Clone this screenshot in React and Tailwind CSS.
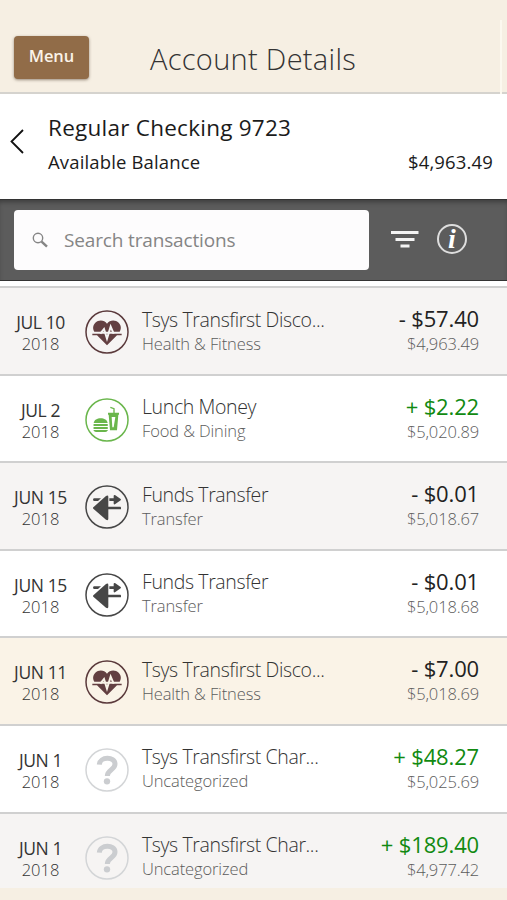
const iconProps = {
  viewBox: '0 0 132 132',
  className: 'block h-11 w-11 shrink-0',
  'aria-hidden': true,
}

function HeartIcon({ bg }) {
  return (
    <svg {...iconProps}>
      <circle cx="66" cy="66" r="63" fill="none" stroke="#5b3a3c" strokeWidth="4.5" />
      <g fill="#633f41">
        <path d="M28 65 C22 55 24 45 31 38 C41 28 58 29 66 41 C74 29 91 28 101 38 C108 45 110 55 104 65 Z" />
        <path d="M22 71 H110 V76 H96 L66 106 L36 76 H22 Z" />
      </g>
      <path d="M46 71 L57 57 L66 86 L77 50 L86 71" fill="none" stroke={bg} strokeWidth="6" />
    </svg>
  )
}

function FoodIcon() {
  return (
    <svg {...iconProps}>
      <circle cx="66" cy="66" r="63" fill="none" stroke="#6ab64c" strokeWidth="4.5" />
      <g fill="#6ab64c">
        <path d="M26 75 C28 56 66 56 68 75 Z" />
        <rect x="25" y="78" width="44" height="6" rx="3" />
        <rect x="25" y="87" width="44" height="6" rx="3" />
        <path d="M26 96 H68 V97 Q67 102 61 102 H33 Q27 102 26 97 Z" />
        <path
          fillRule="evenodd"
          d="M69 44 H102 V50 H100 L96 97 H75 L71 50 H69 Z M80 57 L82 88 H86 L91 57 Z"
        />
      </g>
      <path d="M76 28 L87 32 V45" fill="none" stroke="#6ab64c" strokeWidth="4" />
    </svg>
  )
}

function TransferIcon() {
  return (
    <svg {...iconProps}>
      <circle cx="66" cy="66" r="63" fill="none" stroke="#474747" strokeWidth="4.5" />
      <g fill="#474747">
        <path d="M25 67 L63 33 Q70 29 70 36 V101 Q70 108 63 104 L25 71 Q23 69 25 67 Z" />
        <rect x="66" y="65" width="42" height="8" rx="2" />
        <path d="M26 40 H48 L39 48 H26 Q22 44 26 40 Z" />
        <path d="M73 40 H86 V32 Q87 28 91 31 L107 42 Q109 44 107 46 L91 57 Q87 60 86 56 V48 H73 Z" />
      </g>
    </svg>
  )
}

function UnknownIcon() {
  return (
    <svg {...iconProps}>
      <circle cx="66" cy="66" r="63" fill="none" stroke="#d3d5d7" strokeWidth="4.5" />
      <path
        d="M43 50 C44 25 90 25 90 48 C90 66 67 64 67 84"
        fill="none"
        stroke="#cbcdd0"
        strokeWidth="15"
      />
      <circle cx="66" cy="100" r="9.5" fill="#cbcdd0" />
    </svg>
  )
}

const icons = { heart: HeartIcon, food: FoodIcon, transfer: TransferIcon, unknown: UnknownIcon }

const rows = [
  { date: 'JUL 10', name: 'Tsys Transfirst Disco...', category: 'Health & Fitness', amount: '- $57.40', balance: '$4,963.49', icon: 'heart', shade: 'bg-[#f6f4f3]', bg: '#f6f4f3' },
  { date: 'JUL 2', name: 'Lunch Money', category: 'Food & Dining', amount: '+ $2.22', balance: '$5,020.89', icon: 'food', shade: 'bg-white', credit: true },
  { date: 'JUN 15', name: 'Funds Transfer', category: 'Transfer', amount: '- $0.01', balance: '$5,018.67', icon: 'transfer', shade: 'bg-[#f6f4f3]' },
  { date: 'JUN 15', name: 'Funds Transfer', category: 'Transfer', amount: '- $0.01', balance: '$5,018.68', icon: 'transfer', shade: 'bg-white' },
  { date: 'JUN 11', name: 'Tsys Transfirst Disco...', category: 'Health & Fitness', amount: '- $7.00', balance: '$5,018.69', icon: 'heart', shade: 'bg-[#faf3e7]', bg: '#faf3e7' },
  { date: 'JUN 1', name: 'Tsys Transfirst Char...', category: 'Uncategorized', amount: '+ $48.27', balance: '$5,025.69', icon: 'unknown', shade: 'bg-white', credit: true },
  { date: 'JUN 1', name: 'Tsys Transfirst Char...', category: 'Uncategorized', amount: '+ $189.40', balance: '$4,977.42', icon: 'unknown', shade: 'bg-[#f6f4f3]', credit: true },
]

function Row({ row }) {
  const Icon = icons[row.icon]
  return (
    <li className={`flex h-[87.6px] shrink-0 items-start border-t-2 border-[#d0d0d0] whitespace-nowrap ${row.shade}`}>
      <div className="flex w-[81px] shrink-0 flex-col items-center pt-[24px] text-[#333]">
        <span className="text-[17.5px] leading-[21px] tracking-[-0.4px]">{row.date}</span>
        <span className="text-[16.5px] leading-[21px] font-light">2018</span>
      </div>
      <div className="ml-1 pt-[22px]">
        <Icon bg={row.bg} />
      </div>
      <div className="ml-[13px] flex flex-1 flex-col pt-[18.5px] font-light">
        <span className="text-[19.5px] leading-[25px] tracking-[-0.38px] text-[#333]">{row.name}</span>
        <span className="text-[16.5px] leading-6 tracking-[-0.12px] text-[#5c5c5c]">{row.category}</span>
      </div>
      <div className="flex flex-col items-end pt-[17px] pr-7">
        <span className={`text-[22px] leading-[27px] tracking-[-0.15px] ${row.credit ? 'text-[#118a11]' : 'text-[#222]'}`}>{row.amount}</span>
        <span className="text-[16.5px] leading-[23.5px] font-light tracking-[-0.15px] text-[#5c5c5c]">{row.balance}</span>
      </div>
    </li>
  )
}

export default function App() {
  return (
    <div className="flex h-[900px] w-full flex-col overflow-hidden bg-[#f6efe3] font-['Open_Sans','Noto_Sans',sans-serif]">
      <header className="flex h-[94px] shrink-0 items-start border-b-2 border-[#d5d3ce] pl-3.5">
        <button className="mt-9 h-[43px] w-[75px] rounded-[4px] bg-[#916c48] pb-[3px] text-[16.5px] font-semibold tracking-[-0.1px] text-[#fbf3e8] shadow-[0_1px_3px_rgba(60,40,20,0.5)]">
          Menu
        </button>
        <h1 className="mt-[39px] ml-[61px] text-[29px] leading-10 font-light tracking-[0.3px] text-[#333]">Account Details</h1>
        <div className="mt-5 ml-auto h-[74px] w-[7px] border-l-2 border-[#fcf8ef]" />
      </header>

      <section className="flex h-[105px] shrink-0 bg-white text-[#1b1b1b]">
        <svg viewBox="0 0 14 26" className="mt-[34px] ml-2.5 h-[26px] w-3.5" fill="none" stroke="#111" strokeWidth="1.8">
          <path d="M13 2 L1.5 13.5 L13 25" />
        </svg>
        <div className="ml-6 flex flex-1 flex-col pt-[18px] pr-3.5">
          <h2 className="text-[22.5px] leading-8 tracking-[0.25px]">Regular Checking 9723</h2>
          <div className="flex justify-between pt-1 text-[18.5px] leading-7 tracking-[0.15px]">
            <span>Available Balance</span>
            <span>$4,963.49</span>
          </div>
        </div>
      </section>

      <section className="flex h-[82px] shrink-0 items-center border-y border-[#333] bg-[#5c5c5c] pl-3.5 shadow-[inset_0_4px_5px_-2px_rgba(0,0,0,0.35)]">
        <div className="flex h-[60px] w-[355px] items-center rounded-[4px] bg-[#fdfcfd]">
          <svg viewBox="0 0 16 16" className="ml-[18px] h-4 w-4" fill="none" stroke="#858585">
            <circle cx="6" cy="6" r="4.7" strokeWidth="1.4" />
            <path d="M9.6 9.6 L15 14.7" strokeWidth="2.4" />
          </svg>
          <span className="ml-4 text-[19px] tracking-[-0.15px] text-[#858585]">Search transactions</span>
        </div>
        <svg viewBox="0 0 28 18" className="ml-[22px] h-[18px] w-7" fill="#f4f4f4">
          <rect x="0" y="0" width="27.5" height="3" />
          <rect x="4.5" y="7" width="19" height="3" />
          <rect x="9.5" y="13.5" width="9" height="3" />
        </svg>
        <span className="mb-0.5 ml-[18px] flex h-[30px] w-[30px] items-center justify-center rounded-full border-2 border-[#dedede] font-['Liberation_Serif',serif] text-[28px] leading-none font-bold text-white italic">
          i
        </span>
      </section>

      <ul className="flex h-[607px] flex-col overflow-hidden border-t-[5.5px] border-white">
        {rows.map((row, i) => (
          <Row key={i} row={row} />
        ))}
      </ul>
      <footer className="h-3 shrink-0 bg-[#f6efe3]" />
    </div>
  )
}
